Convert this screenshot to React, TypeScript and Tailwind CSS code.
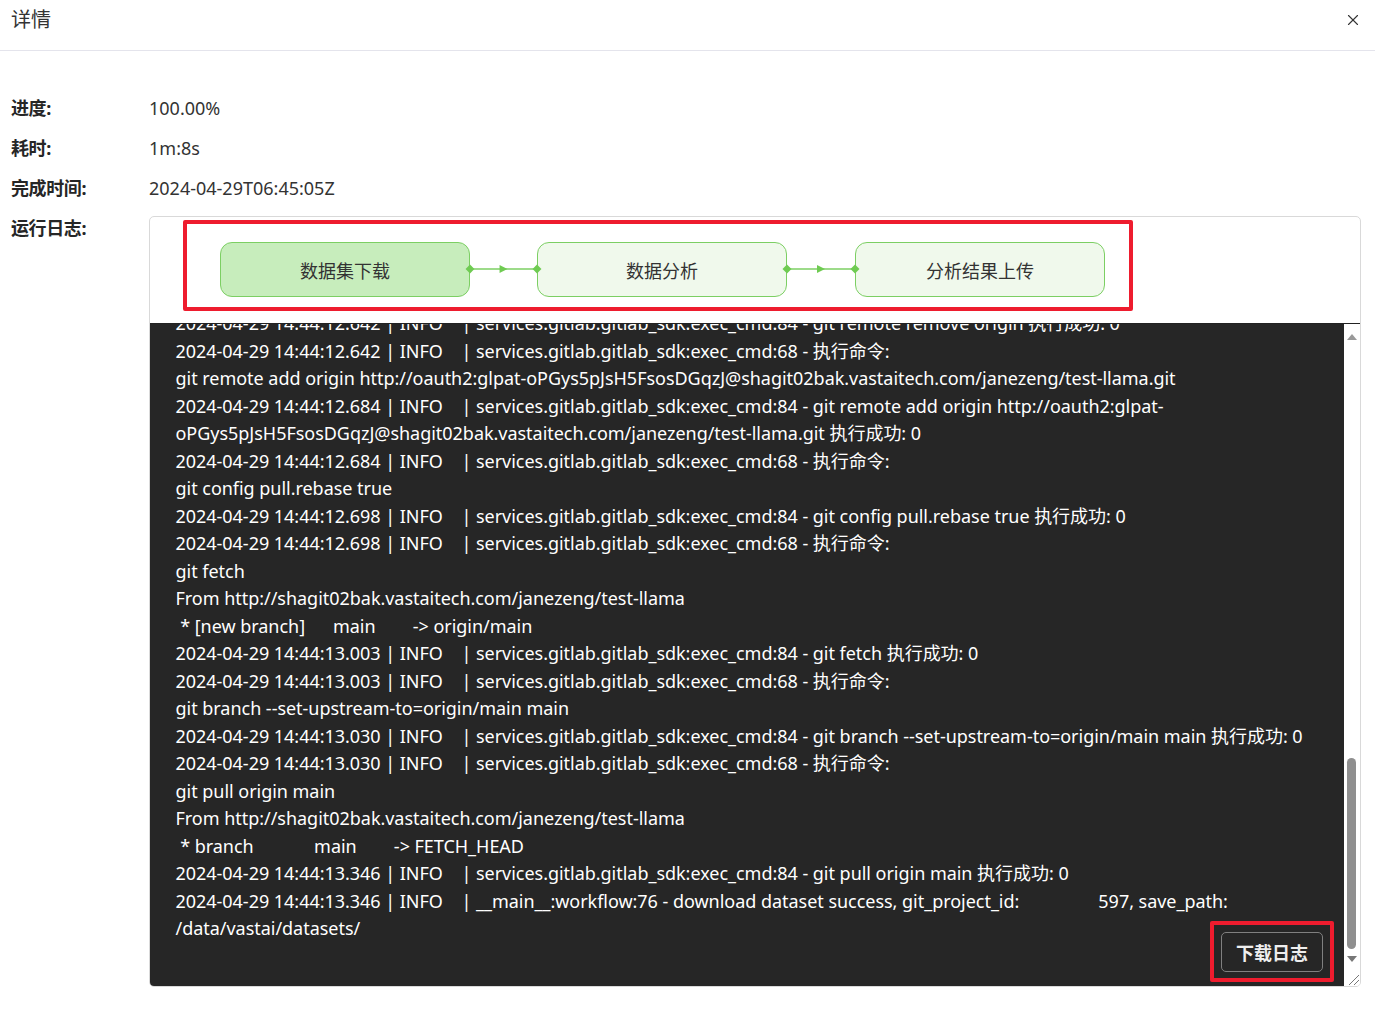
import React from "react";
import { X } from "lucide-react";

const F = "font-['Noto_Sans','Noto_Sans_CJK_SC',sans-serif]";

const lines = [
  "2024-04-29 14:44:12.642 | INFO    | services.gitlab.gitlab_sdk:exec_cmd:84 - git remote remove origin 执行成功: 0",
  "2024-04-29 14:44:12.642 | INFO    | services.gitlab.gitlab_sdk:exec_cmd:68 - 执行命令:",
  "git remote add origin http://oauth2:glpat-oPGys5pJsH5FsosDGqzJ@shagit02bak.vastaitech.com/janezeng/test-llama.git",
  "2024-04-29 14:44:12.684 | INFO    | services.gitlab.gitlab_sdk:exec_cmd:84 - git remote add origin http://oauth2:glpat-",
  "oPGys5pJsH5FsosDGqzJ@shagit02bak.vastaitech.com/janezeng/test-llama.git 执行成功: 0",
  "2024-04-29 14:44:12.684 | INFO    | services.gitlab.gitlab_sdk:exec_cmd:68 - 执行命令:",
  "git config pull.rebase true",
  "2024-04-29 14:44:12.698 | INFO    | services.gitlab.gitlab_sdk:exec_cmd:84 - git config pull.rebase true 执行成功: 0",
  "2024-04-29 14:44:12.698 | INFO    | services.gitlab.gitlab_sdk:exec_cmd:68 - 执行命令:",
  "git fetch",
  "From http://shagit02bak.vastaitech.com/janezeng/test-llama",
  " * [new branch]      main        -> origin/main",
  "2024-04-29 14:44:13.003 | INFO    | services.gitlab.gitlab_sdk:exec_cmd:84 - git fetch 执行成功: 0",
  "2024-04-29 14:44:13.003 | INFO    | services.gitlab.gitlab_sdk:exec_cmd:68 - 执行命令:",
  "git branch --set-upstream-to=origin/main main",
  "2024-04-29 14:44:13.030 | INFO    | services.gitlab.gitlab_sdk:exec_cmd:84 - git branch --set-upstream-to=origin/main main 执行成功: 0",
  "2024-04-29 14:44:13.030 | INFO    | services.gitlab.gitlab_sdk:exec_cmd:68 - 执行命令:",
  "git pull origin main",
  "From http://shagit02bak.vastaitech.com/janezeng/test-llama",
  " * branch             main        -> FETCH_HEAD",
  "2024-04-29 14:44:13.346 | INFO    | services.gitlab.gitlab_sdk:exec_cmd:84 - git pull origin main 执行成功: 0",
  "2024-04-29 14:44:13.346 | INFO    | __main__:workflow:76 - download dataset success, git_project_id:                 597, save_path:",
  "/data/vastai/datasets/",
];

function Row({ label, value }: { label: string; value: string }) {
  return (
    <div className="flex h-10 items-center">
      <div className="w-[138px] text-[18px] font-bold tracking-[-0.4px] text-[#262626]">{label}</div>
      <div className="text-[18px] text-[#333]">{value}</div>
    </div>
  );
}

function Node({ text, active }: { text: string; active?: boolean }) {
  return (
    <div
      className={`flex h-[55px] w-[250px] shrink-0 items-center justify-center rounded-[12px] border border-[#7ccf63] pt-[3px] text-[18px] text-[#333] ${
        active ? "bg-[#c7edbc]" : "bg-[#f0f9ec]"
      }`}
    >
      {text}
    </div>
  );
}

function Edge({ wide }: { wide?: boolean }) {
  return (
    <svg
      viewBox="0 0 68 12"
      className={`z-10 -mt-[1px] h-[12px] shrink-0 overflow-visible ${wide ? "w-[68px]" : "w-[67px]"}`}
    >
      <path d="M0 6h68" stroke="#7ccf63" strokeWidth="1.5" />
      <path d="M-4.5 6L0 1.5 4.5 6 0 10.500z" fill="#6fcb52" />
      <path d="M63.5 6L68 1.5 72.500 6 68 10.500z" fill="#6fcb52" />
      <path d="M30 2l8 4-8 4z" fill="#6fcb52" />
    </svg>
  );
}

export default function App() {
  return (
    <div className={`h-[1014px] w-[1375px] overflow-hidden bg-white ${F}`}>
      <div className="flex h-[51px] items-center justify-between border-b border-[#e4e4ec] pb-[10px] pl-[11px] pr-[13px]">
        <span className="text-[20px] text-[#333]">详情</span>
        <X size={18} strokeWidth={1.5} className="text-[#333]" />
      </div>
      <div className="pl-[11px] pr-[14px] pt-[37px]">
        <Row label="进度:" value="100.00%" />
        <Row label="耗时:" value="1m:8s" />
        <Row label="完成时间:" value="2024-04-29T06:45:05Z" />
        <div className="flex">
          <div className="h-10 w-[138px] pt-[7px] text-[18px] font-bold tracking-[-0.4px] text-[#262626]">运行日志:</div>
          <div className="mt-[8px] h-[771px] w-[1212px] overflow-hidden rounded-[5px] border border-[#d9d9d9]">
            <div className="h-[106px] pl-[33px] pt-[3px]">
              <div className="flex h-[91px] w-[950px] items-center rounded-[2px] border-4 border-[#ee1c2e] pl-[33px] pt-[8px]">
                <Node text="数据集下载" active />
                <Edge />
                <Node text="数据分析" />
                <Edge wide />
                <Node text="分析结果上传" />
              </div>
            </div>
            <div className="relative flex h-[663px] border-t border-[#222]">
              <div className="min-w-0 flex-1 overflow-hidden bg-[#262626] pl-[25.500px] text-[18px] leading-[27.5px] tracking-[-0.03px] text-white">
                <div className="mt-[-14px]">
                  {lines.map((l, i) => (
                    <div key={i} className="h-[27.5px] whitespace-pre">
                      {l}
                    </div>
                  ))}
                </div>
              </div>
              <div className="flex w-[16px] shrink-0 flex-col items-center bg-white">
                <svg width="10" height="6" viewBox="0 0 10 6" className="mt-[10px]">
                  <path d="M5 0l5 6H0z" fill="#999" />
                </svg>
                <div className="mr-[1px] mt-[418px] h-[191px] w-[9px] rounded-[5px] bg-[#8f8f8f]" />
                <svg width="10" height="6" viewBox="0 0 10 6" className="mt-[7px]">
                  <path d="M0 0h10L5 6z" fill="#777" />
                </svg>
                <svg width="16" height="16" viewBox="0 0 16 16" className="mt-auto">
                  <path d="M5 15L15 5M10 15l5-5" stroke="#777" strokeWidth="1" />
                </svg>
              </div>
              <div className="absolute left-[1060px] top-[597px] flex h-[61px] w-[124px] items-center justify-center rounded-[2px] border-4 border-[#ee1c2e]">
                <div className="flex h-[40px] w-[102px] items-center justify-center rounded-[5px] border border-[#808080] bg-[#262626] pt-[3px] text-[18px] font-bold text-[#eee]">
                  下载日志
                </div>
              </div>
            </div>
          </div>
        </div>
      </div>
    </div>
  );
}
